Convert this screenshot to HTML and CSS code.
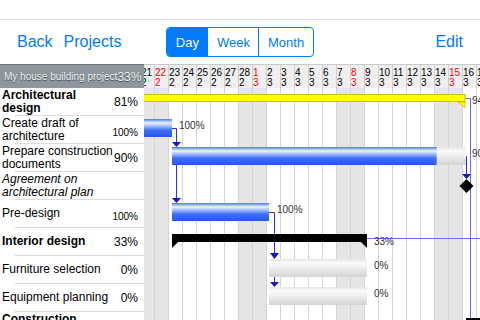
FILE: index.html
```html
<!DOCTYPE html>
<html lang="en">
<head>
    <meta charset="UTF-8">
    <title>My house building project</title>
    <link rel="stylesheet" href="styles.css">
</head>
<body>
    <div class="status"></div>
    <div class="navbar">
        <div class="nav-left">
            <a class="nav-link">Back</a>
            <a class="nav-link">Projects</a>
        </div>
        <div class="segments">
            <span class="seg active">Day</span>
            <span class="seg">Week</span>
            <span class="seg">Month</span>
        </div>
        <a class="nav-link edit">Edit</a>
    </div>

    <div class="gantt">
        <div class="side">
            <div class="side-head">
                <span class="project">My house building project</span>
                <span class="project-pct">33%</span>
            </div>
            <div class="row group"><span class="name">Architectural design</span><span class="pct">81%</span></div>
            <div class="row"><span class="name">Create draft of architecture</span><span class="pct small">100%</span></div>
            <div class="row"><span class="name">Prepare construction documents</span><span class="pct">90%</span></div>
            <div class="row milestone"><span class="name">Agreement on architectural plan</span></div>
            <div class="row"><span class="name">Pre-design</span><span class="pct small">100%</span></div>
            <div class="row group"><span class="name">Interior design</span><span class="pct">33%</span></div>
            <div class="row"><span class="name">Furniture selection</span><span class="pct">0%</span></div>
            <div class="row"><span class="name">Equipment planning</span><span class="pct">0%</span></div>
            <div class="row group"><span class="name">Construction supervision</span><span class="pct">0%</span></div>
        </div>

        <div class="chart">
            <div class="days">
                <div class="day"><span>21</span><span>2</span></div>
                <div class="day sun"><span>22</span><span>2</span></div>
                <div class="day"><span>23</span><span>2</span></div>
                <div class="day"><span>24</span><span>2</span></div>
                <div class="day"><span>25</span><span>2</span></div>
                <div class="day"><span>26</span><span>2</span></div>
                <div class="day"><span>27</span><span>2</span></div>
                <div class="day"><span>28</span><span>2</span></div>
                <div class="day sun"><span>1</span><span>3</span></div>
                <div class="day"><span>2</span><span>3</span></div>
                <div class="day"><span>3</span><span>3</span></div>
                <div class="day"><span>4</span><span>3</span></div>
                <div class="day"><span>5</span><span>3</span></div>
                <div class="day"><span>6</span><span>3</span></div>
                <div class="day"><span>7</span><span>3</span></div>
                <div class="day sun"><span>8</span><span>3</span></div>
                <div class="day"><span>9</span><span>3</span></div>
                <div class="day"><span>10</span><span>3</span></div>
                <div class="day"><span>11</span><span>3</span></div>
                <div class="day"><span>12</span><span>3</span></div>
                <div class="day"><span>13</span><span>3</span></div>
                <div class="day"><span>14</span><span>3</span></div>
                <div class="day sun"><span>15</span><span>3</span></div>
                <div class="day"><span>16</span><span>3</span></div>
                <div class="day"><span>17</span><span>3</span></div>
            </div>

            <svg class="bars" width="340" height="232" viewBox="0 0 340 232">
                <defs>
                    <linearGradient id="blue" x1="0" y1="0" x2="0" y2="1">
                        <stop offset="0" stop-color="#4677f6"/>
                        <stop offset="0.22" stop-color="#eef3ff"/>
                        <stop offset="0.38" stop-color="#a8c0fb"/>
                        <stop offset="0.62" stop-color="#3d6ff6"/>
                        <stop offset="1" stop-color="#2657f2"/>
                    </linearGradient>
                    <linearGradient id="grey" x1="0" y1="0" x2="0" y2="1">
                        <stop offset="0" stop-color="#e4e4e4"/>
                        <stop offset="0.22" stop-color="#fbfbfb"/>
                        <stop offset="0.55" stop-color="#ebebeb"/>
                        <stop offset="1" stop-color="#d4d4d4"/>
                    </linearGradient>
                </defs>

                <!-- weekends -->
                <g fill="#e5e5e5">
                    <rect x="0" y="0" width="28" height="232"/>
                    <rect x="98" y="0" width="28" height="232"/>
                    <rect x="196" y="0" width="28" height="232"/>
                    <rect x="294" y="0" width="28" height="232"/>
                </g>
                <path stroke="#d4d4d4" d="M14.5 0V232M28.5 0V232M42.5 0V232M56.5 0V232M70.5 0V232M84.5 0V232M98.5 0V232M112.5 0V232M126.5 0V232M140.5 0V232M154.5 0V232M168.5 0V232M182.5 0V232M196.5 0V232M210.5 0V232M224.5 0V232M238.5 0V232M252.5 0V232M266.5 0V232M280.5 0V232M294.5 0V232M308.5 0V232M322.5 0V232M336.5 0V232"/>

                <!-- links -->
                <g fill="none" stroke="#6a6aff">
                    <path d="M325 10.5H330.5V232"/>
                    <path d="M227 150.5H340"/>
                </g>
                <g fill="none" stroke="#2a2aff">
                    <path d="M32 40.5H36.5V54"/>
                    <path d="M36.5 77V110"/>
                    <path d="M129 124.5H134.5V165"/>
                    <path d="M134.5 189V194"/>
                    <path d="M326 68.5H326.5V86"/>
                </g>
                <g fill="#1414cc">
                    <polygon points="32,54 41,54 36.5,59"/>
                    <polygon points="32,110 41,110 36.5,115"/>
                    <polygon points="130,165 139,165 134.5,171"/>
                    <polygon points="130,194 139,194 134.5,199"/>
                    <polygon points="322,86 331,86 326.5,91"/>
                </g>

                <!-- architectural design -->
                <rect x="-6" y="6.5" width="331" height="7" fill="#ffff00" stroke="#c4c400"/>
                <polygon points="318,14 325,14 325,20" fill="#ffff00" stroke="#c4c400" stroke-width="0.8"/>
                <rect x="-6" y="31" width="38" height="18" fill="url(#blue)"/>
                <rect x="32" y="59" width="294" height="18" fill="url(#grey)"/>
                <rect x="32" y="59" width="264.6" height="18" fill="url(#blue)"/>
                <polygon points="326.5,91 333.5,98 326.5,105 319.5,98" fill="#000"/>
                <rect x="32" y="115" width="97" height="18" fill="url(#blue)"/>

                <!-- interior design -->
                <rect x="32" y="146" width="195" height="8" fill="#000"/>
                <polygon points="32,154 38,154 32,160" fill="#000"/>
                <polygon points="221,154 227,154 227,160" fill="#000"/>
                <rect x="129" y="171" width="98" height="18" fill="url(#grey)"/>
                <rect x="129" y="199" width="98" height="18" fill="url(#grey)"/>

                <!-- construction -->
                <rect x="326" y="230" width="20" height="8" fill="#000"/>

                <g class="label">
                    <text x="332" y="16">94%</text>
                    <text x="39" y="41">100%</text>
                    <text x="332" y="69">90%</text>
                    <text x="137" y="125">100%</text>
                    <text x="234" y="157">33%</text>
                    <text x="234" y="181">0%</text>
                    <text x="234" y="209">0%</text>
                </g>
            </svg>
        </div>
    </div>
</body>
</html>
```

FILE: styles.css
```css
body {
    margin: 0;
    width: 480px;
    height: 320px;
    overflow: hidden;
    font-family: "Liberation Sans", Arial, sans-serif;
    background-color: #fff;
}
.status {
    height: 20px;
    box-sizing: border-box;
    border-bottom: 1px solid #e4e4e4;
}
.navbar {
    height: 44px;
    padding: 0 17px;
    display: grid;
    grid-template-columns: 1fr auto 1fr;
    align-items: center;
}
.nav-left {
    display: flex;
    gap: 11px;
}
.nav-link {
    color: #007aff;
    font-size: 16px;
}
.edit {
    justify-self: end;
}
.segments {
    display: flex;
    height: 30px;
    box-sizing: border-box;
    border: 1px solid #007aff;
    border-radius: 4px;
    overflow: hidden;
}
.seg {
    display: flex;
    align-items: center;
    padding: 0 8.5px;
    font-size: 13px;
    color: #007aff;
}
.seg + .seg {
    border-left: 1px solid #007aff;
}
.seg.active {
    background-color: #007aff;
    color: #fff;
}

.gantt {
    display: flex;
    height: 256px;
    overflow: hidden;
}
.side {
    width: 144px;
    flex: none;
}
.side-head {
    height: 24px;
    box-sizing: border-box;
    padding: 0 4px;
    display: flex;
    align-items: center;
    justify-content: space-between;
    background-color: #8e979e;
    border-top: 1px solid #6b7379;
    color: #f2f4f6;
    text-shadow: 0 1px 1px rgba(0, 0, 0, 0.55);
    white-space: nowrap;
}
.project {
    font-size: 10px;
}
.project-pct {
    font-size: 12px;
}
.row {
    height: 28px;
    box-sizing: border-box;
    padding: 0 6px 1px 2px;
    display: flex;
    align-items: center;
    font-size: 12px;
    color: #000;
    background: linear-gradient(#dcdcdc, #dcdcdc) no-repeat 15px 100% / 129px 1px;
}
.name {
    width: 111px;
    line-height: 13px;
}
.group .name {
    font-weight: bold;
}
.milestone .name {
    font-style: italic;
}
.pct {
    margin-left: auto;
}
.pct.small {
    font-size: 10px;
    margin-top: 6px;
}

.chart {
    flex: 1;
    overflow: hidden;
}
.days {
    display: flex;
    height: 24px;
    margin-left: -4px;
    box-sizing: border-box;
    border-top: 1px solid #c9c9c9;
    background-color: #efefef;
}
.day {
    width: 14px;
    flex: none;
    box-sizing: border-box;
    border-left: 1px solid #d0d0d0;
    padding-top: 3px;
    display: flex;
    flex-direction: column;
    font-size: 10px;
    line-height: 10px;
    white-space: nowrap;
}
.day.sun {
    color: #f00;
}
.bars {
    display: block;
    margin-left: -4px;
}
.label {
    font-family: "Liberation Sans", Arial, sans-serif;
    font-size: 10px;
    fill: #333;
}
```
